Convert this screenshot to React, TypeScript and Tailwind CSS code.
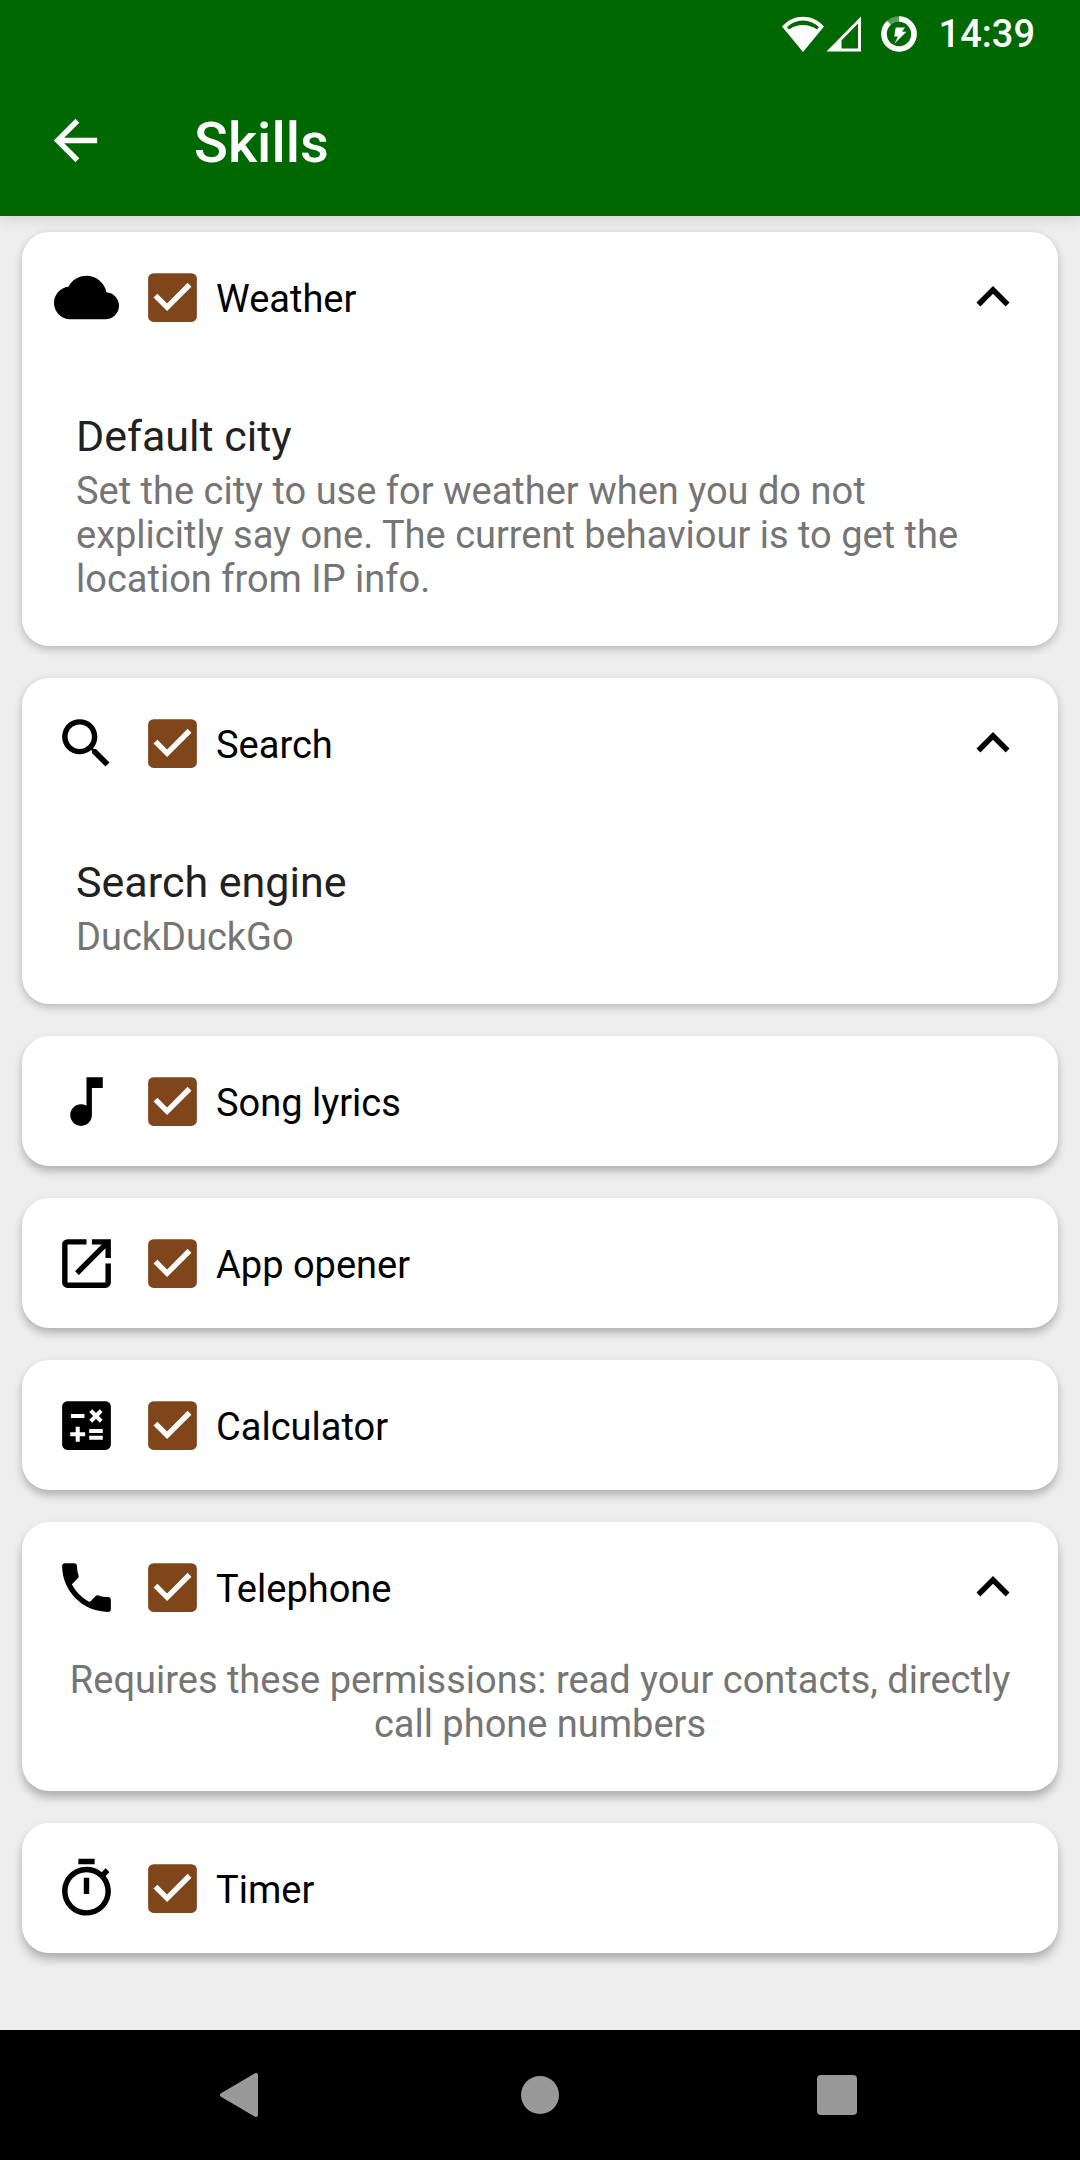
import { useId, useState } from "react";
import type { ReactNode } from "react";
import type { IconType } from "react-icons";
import {
  MdArrowBack,
  MdCalculate,
  MdCheckBox,
  MdCheckBoxOutlineBlank,
  MdCloud,
  MdExpandLess,
  MdExpandMore,
  MdMusicNote,
  MdOpenInNew,
  MdOutlineTimer,
  MdPhone,
  MdSearch,
} from "react-icons/md";

function StatusBar() {
  return (
    <div className="flex h-[64px] items-center justify-end pr-[45px] pt-[3px] text-white">
      <svg width="42" height="36" viewBox="0 0 42 36" aria-hidden="true">
        <path d="M21 36L0 10.5C6 4 13 0.8 21 0.8S36 4 42 10.5Z" fill="currentColor" />
        <path d="M5 11C9.5 6.8 15 4.6 21 4.6S32.5 6.8 37 11L35 13.6C31 10.6 26 9 21 9S11 10.6 7 13.6Z" fill="#006800" />
      </svg>
      <svg className="ml-[2px]" width="36" height="36" viewBox="0 0 36 36" aria-hidden="true">
        <path
          d="M35 0.5V35.5H0.5ZM32 7.5L15.5 24.5V32.5H32Z"
          fill="currentColor"
          fillRule="evenodd"
        />
      </svg>
      <svg className="ml-[18px]" width="38" height="36" viewBox="0 0 38 36" fill="none" aria-hidden="true">
        <circle cx="19" cy="18" r="15" stroke="currentColor" strokeWidth="5.5" opacity="0.35" />
        <path d="M19 3A15 15 0 1 1 9 6.8" stroke="currentColor" strokeWidth="5.5" />
        <path d="M15.7 11.5H25L22 15.8H26.5L14.5 27.5L18 20.5H14.2Z" fill="currentColor" />
      </svg>
      <time className="ml-[21px] text-[38px] font-medium leading-[44px]">14:39</time>
    </div>
  );
}

function AppBar() {
  return (
    <header className="relative z-10 bg-[#006800] text-white shadow-[0_3px_14px_rgba(0,0,0,0.12)]">
      <StatusBar />
      <div className="flex h-[152px] items-center pl-[43px]">
        <button type="button" aria-label="Navigate up" className="size-[65px]">
          <MdArrowBack className="size-full" />
        </button>
        <h1 className="ml-[86px] pt-[6px] text-[56px] font-medium leading-[64px]">Skills</h1>
      </div>
    </header>
  );
}

type SkillProps = {
  icon: IconType;
  name: string;
  shadow: string;
  children?: ReactNode;
};

function Skill({ icon: Icon, name, shadow, children }: SkillProps) {
  const id = useId();
  const [enabled, setEnabled] = useState(true);
  const [open, setOpen] = useState(true);
  const Box = enabled ? MdCheckBox : MdCheckBoxOutlineBlank;

  return (
    <li className={`rounded-[27px] bg-white ${shadow}`}>
      <div className="flex h-[130px] items-center px-[32px]">
        <Icon className="size-[65px] shrink-0" aria-hidden="true" />
        <span className="ml-[21px] grid size-[65px] shrink-0">
          <Box className="size-full text-[#80461b] [grid-area:1/1]" aria-hidden="true" />
          <input
            id={id}
            type="checkbox"
            checked={enabled}
            onChange={() => setEnabled(!enabled)}
            className="size-full appearance-none [grid-area:1/1]"
          />
        </span>
        <label htmlFor={id} className="ml-[11px] flex-1 pt-[4px] text-[38px] leading-[44px]">
          {name}
        </label>
        {children && (
          <button
            type="button"
            aria-label={`${name} details`}
            aria-expanded={open}
            onClick={() => setOpen(!open)}
            className="size-[66px]"
          >
            {open ? <MdExpandLess className="size-full" /> : <MdExpandMore className="size-full" />}
          </button>
        )}
      </div>
      {open && children}
    </li>
  );
}

function Preference({ title, summary }: { title: string; summary: string }) {
  return (
    <div className="px-[54px] pb-[45px] pt-[46px]">
      <h2 className="text-[43px] leading-[56px] text-[#212121]">{title}</h2>
      <p className="pt-[5px] text-[38px] leading-[44px] text-[#757575]">{summary}</p>
    </div>
  );
}

const shadows = {
  soft: "shadow-[0_3px_9px_rgba(0,0,0,0.24)]",
  medium: "shadow-[0_5px_9px_rgba(0,0,0,0.26)]",
  deep: "shadow-[0_6px_10px_rgba(0,0,0,0.28)]",
};

function NavigationBar() {
  return (
    <nav className="flex h-[130px] bg-black px-[94px] text-[#999999]">
      <button type="button" aria-label="Back" className="flex flex-1 items-center justify-center">
        <svg width="66" height="66" viewBox="0 0 66 66" aria-hidden="true">
          <path
            d="M12 33L46 13V53Z"
            fill="currentColor"
            stroke="currentColor"
            strokeWidth="4"
            strokeLinejoin="round"
          />
        </svg>
      </button>
      <button type="button" aria-label="Home" className="flex flex-1 items-center justify-center">
        <span className="size-[38px] rounded-full bg-current" />
      </button>
      <button type="button" aria-label="Recent apps" className="flex flex-1 items-center justify-center">
        <span className="size-[40px] rounded-[4px] bg-current" />
      </button>
    </nav>
  );
}

export default function App() {
  return (
    <div className="flex min-h-screen flex-col bg-[#eeeeee] font-[Roboto,sans-serif] text-black">
      <AppBar />
      <main className="flex-1">
        <ul className="flex flex-col gap-[32px] px-[22px] pb-[77px] pt-[16px]">
          <Skill icon={MdCloud} name="Weather" shadow={shadows.soft}>
            <Preference
              title="Default city"
              summary="Set the city to use for weather when you do not explicitly say one. The current behaviour is to get the location from IP info."
            />
          </Skill>
          <Skill icon={MdSearch} name="Search" shadow={shadows.soft}>
            <Preference title="Search engine" summary="DuckDuckGo" />
          </Skill>
          <Skill icon={MdMusicNote} name="Song lyrics" shadow={shadows.medium} />
          <Skill icon={MdOpenInNew} name="App opener" shadow={shadows.medium} />
          <Skill icon={MdCalculate} name="Calculator" shadow={shadows.medium} />
          <Skill icon={MdPhone} name="Telephone" shadow={shadows.deep}>
            <p className="px-[44px] pb-[45px] pt-[6px] text-center text-[38px] leading-[44px] text-[#757575]">
              Requires these permissions: read your contacts, directly call phone numbers
            </p>
          </Skill>
          <Skill icon={MdOutlineTimer} name="Timer" shadow={shadows.deep} />
        </ul>
      </main>
      <NavigationBar />
    </div>
  );
}
